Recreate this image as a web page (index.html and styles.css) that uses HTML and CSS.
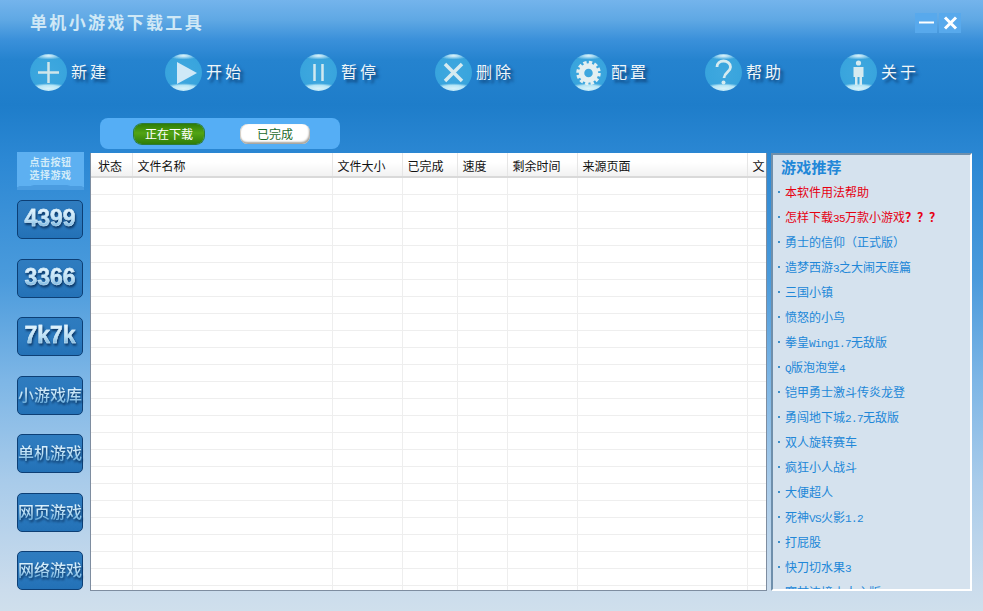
FILE: index.html
```html
<!DOCTYPE html>
<html lang="zh">
<head>
<meta charset="utf-8">
<title>单机小游戏下载工具</title>
<link rel="stylesheet" href="styles.css">
</head>
<body>
<div class="app">
  <header class="titlebar">
    <h1 class="title">单机小游戏下载工具</h1>
    <div class="winctl">
      <button class="winbtn"><svg viewBox="0 0 22 20" width="22" height="20"><path d="M4 9.500h15" stroke="#fff" stroke-width="2"/></svg></button>
      <button class="winbtn"><svg viewBox="0 0 22 20" width="22" height="20"><path d="M6 4.500l11 11M17 4.500l-11 11" stroke="#fff" stroke-width="3"/></svg></button>
    </div>
  </header>
  <nav class="toolbar">
    <div class="tool"><span class="ball"><svg viewBox="0 0 37 37"><path d="M18.500 8v21M8 18.500h21" stroke="#cfe6ea" stroke-width="2.500"/></svg></span><span class="tool-label">新建</span></div>
    <div class="tool"><span class="ball"><svg viewBox="0 0 37 37"><path d="M12 8L32 19 12 30z" fill="#cfe9f7"/></svg></span><span class="tool-label">开始</span></div>
    <div class="tool"><span class="ball"><svg viewBox="0 0 37 37"><path d="M14.500 10v17M22.500 10v17" stroke="#cfe9f0" stroke-width="2.500"/></svg></span><span class="tool-label">暂停</span></div>
    <div class="tool"><span class="ball"><svg viewBox="0 0 37 37"><path d="M10 10l17 17M27 10L10 27" stroke="#d6ebf0" stroke-width="3.500"/></svg></span><span class="tool-label">删除</span></div>
    <div class="tool"><span class="ball"><svg viewBox="0 0 37 37"><circle cx="18.500" cy="19" r="7" fill="none" stroke="#e3f0f2" stroke-width="5.500"/><circle cx="18.500" cy="19" r="10.500" fill="none" stroke="#e3f0f2" stroke-width="3.500" stroke-dasharray="3.300 2.200"/></svg></span><span class="tool-label">配置</span></div>
    <div class="tool"><span class="ball"><svg viewBox="0 0 37 37"><path d="M12 13c0-4 3-6 6.500-6s7 2.500 7 6c0 5-6 5-6.500 11" fill="none" stroke="#d6ebf0" stroke-width="2.800"/><circle cx="18.500" cy="28.500" r="2" fill="#d6ebf0"/></svg></span><span class="tool-label">帮助</span></div>
    <div class="tool"><span class="ball"><svg viewBox="0 0 37 37"><circle cx="18.500" cy="9" r="2.600" fill="#d6ebf0"/><path d="M13.500 13h10v10h-1.500v8h-2.500v-8h-2v8H15v-8h-1.500z" fill="#d6ebf0"/></svg></span><span class="tool-label">关于</span></div>
  </nav>
  <div class="tabs">
    <button class="tab tab-on">正在下载</button>
    <button class="tab tab-off">已完成</button>
  </div>
  <main class="content">
    <aside class="side">
      <div class="side-head">点击按钮<br>选择游戏</div>
      <button class="site site-num"><span class="site-text">4399</span></button>
      <button class="site site-num"><span class="site-text">3366</span></button>
      <button class="site site-num"><span class="site-text">7k7k</span></button>
      <button class="site"><span class="site-text">小游戏库</span></button>
      <button class="site"><span class="site-text">单机游戏</span></button>
      <button class="site"><span class="site-text">网页游戏</span></button>
      <button class="site"><span class="site-text">网络游戏</span></button>
    </aside>
    <section class="grid-wrap">
      <table class="grid">
        <colgroup><col class="c1"><col class="c2"><col class="c3"><col class="c4"><col class="c5"><col class="c6"><col class="c7"><col class="c8"></colgroup>
        <thead><tr><th>状态</th><th>文件名称</th><th>文件大小</th><th>已完成</th><th>速度</th><th>剩余时间</th><th>来源页面</th><th>文</th></tr></thead>
        <tbody>
          <tr><td></td><td></td><td></td><td></td><td></td><td></td><td></td><td></td></tr>
          <tr><td></td><td></td><td></td><td></td><td></td><td></td><td></td><td></td></tr>
          <tr><td></td><td></td><td></td><td></td><td></td><td></td><td></td><td></td></tr>
          <tr><td></td><td></td><td></td><td></td><td></td><td></td><td></td><td></td></tr>
          <tr><td></td><td></td><td></td><td></td><td></td><td></td><td></td><td></td></tr>
          <tr><td></td><td></td><td></td><td></td><td></td><td></td><td></td><td></td></tr>
          <tr><td></td><td></td><td></td><td></td><td></td><td></td><td></td><td></td></tr>
          <tr><td></td><td></td><td></td><td></td><td></td><td></td><td></td><td></td></tr>
          <tr><td></td><td></td><td></td><td></td><td></td><td></td><td></td><td></td></tr>
          <tr><td></td><td></td><td></td><td></td><td></td><td></td><td></td><td></td></tr>
          <tr><td></td><td></td><td></td><td></td><td></td><td></td><td></td><td></td></tr>
          <tr><td></td><td></td><td></td><td></td><td></td><td></td><td></td><td></td></tr>
          <tr><td></td><td></td><td></td><td></td><td></td><td></td><td></td><td></td></tr>
          <tr><td></td><td></td><td></td><td></td><td></td><td></td><td></td><td></td></tr>
          <tr><td></td><td></td><td></td><td></td><td></td><td></td><td></td><td></td></tr>
          <tr><td></td><td></td><td></td><td></td><td></td><td></td><td></td><td></td></tr>
          <tr><td></td><td></td><td></td><td></td><td></td><td></td><td></td><td></td></tr>
          <tr><td></td><td></td><td></td><td></td><td></td><td></td><td></td><td></td></tr>
          <tr><td></td><td></td><td></td><td></td><td></td><td></td><td></td><td></td></tr>
          <tr><td></td><td></td><td></td><td></td><td></td><td></td><td></td><td></td></tr>
          <tr><td></td><td></td><td></td><td></td><td></td><td></td><td></td><td></td></tr>
          <tr><td></td><td></td><td></td><td></td><td></td><td></td><td></td><td></td></tr>
          <tr><td></td><td></td><td></td><td></td><td></td><td></td><td></td><td></td></tr>
          <tr><td></td><td></td><td></td><td></td><td></td><td></td><td></td><td></td></tr>
          <tr><td></td><td></td><td></td><td></td><td></td><td></td><td></td><td></td></tr>
        </tbody>
      </table>
    </section>
    <aside class="rec">
      <h2 class="rec-title">游戏推荐</h2>
      <ul class="rec-list">
        <li class="hot"><span>本软件用法帮助</span></li>
        <li class="hot"><span>怎样下载<i>35</i>万款小游戏<b>？？？</b></span></li>
        <li><span>勇士的信仰（正式版）</span></li>
        <li><span>造梦西游<i>3</i>之大闹天庭篇</span></li>
        <li><span>三国小镇</span></li>
        <li><span>愤怒的小鸟</span></li>
        <li><span>拳皇<i>Wing1.7</i>无敌版</span></li>
        <li><span><i>Q</i>版泡泡堂<i>4</i></span></li>
        <li><span>铠甲勇士激斗传炎龙登</span></li>
        <li><span>勇闯地下城<i>2.7</i>无敌版</span></li>
        <li><span>双人旋转赛车</span></li>
        <li><span>疯狂小人战斗</span></li>
        <li><span>大便超人</span></li>
        <li><span>死神<i>VS</i>火影<i>1.2</i></span></li>
        <li><span>打屁股</span></li>
        <li><span>快刀切水果<i>3</i></span></li>
        <li><span>赛甘边境小人主版</span></li>
      </ul>
    </aside>
  </main>
</div>
</body>
</html>
```
FILE: styles.css
```css
* { box-sizing: border-box; }
html, body { margin: 0; height: 100%; overflow: hidden; }
body { font-family: "Noto Sans CJK SC", "Liberation Sans", sans-serif; }
button { font-family: inherit; border: 0; padding: 0; }
.app {
  width: 983px; height: 611px; display: flex; flex-direction: column;
  background: linear-gradient(180deg, #74b4ec 0, #5fa8e4 20px, #3a90da 40px, #2583cf 60px, #1e7dca 105px, #2c88d4 160px, #4b9bdc 280px, #7db6e6 380px, #a8cbea 480px, #cbdcec 590px, #cfdfec 611px);
}
.titlebar { height: 46px; padding: 11px 22px 0 30px; display: flex; justify-content: space-between; align-items: flex-start; }
.title { margin: 0; font-size: 17px; line-height: 21px; font-weight: 700; letter-spacing: 2.330px; color: #cfe8f6; white-space: nowrap; }
.winctl { display: flex; gap: 2px; margin-top: 2px; }
.winbtn { width: 22px; height: 20px; background: #58a9ec; display: block; }
.winbtn svg { display: block; }
.toolbar { height: 72px; padding: 8px 0 0 30px; display: flex; align-items: flex-start; }
.tool { width: 135px; display: flex; align-items: center; gap: 4px; height: 37px; }
.ball {
  width: 37px; height: 37px; flex: none; border-radius: 50%; display: block;
  background:
    radial-gradient(ellipse 56% 14% at 50% 93%, #d6f2fb 0, #b5e5f5 60%, transparent 100%),
    radial-gradient(ellipse 40% 10% at 50% 5%, #e4f6fc 0, transparent 100%),
    radial-gradient(circle at 50% 50%, #3fa8df 0, #38a4dd 72%, #6cc3e9 88%, #d8f2fb 100%);
}
.ball svg { display: block; width: 100%; height: 100%; }
.tool-label { font-size: 16px; line-height: 22px; margin-bottom: 4px; letter-spacing: 3px; color: #eef6fa; text-shadow: 3px 3px 3px #0c3f74; white-space: nowrap; }
.tabs { width: 240px; height: 31px; margin-left: 100px; padding: 6px 0 0 34px; background: #55aef5; border-radius: 8px; display: flex; gap: 36px; align-items: flex-start; flex: none; }
.tab { width: 70px; height: 20px; border-radius: 8px; font-size: 12px; line-height: 20px; text-align: center; }
.tab-on { background: linear-gradient(180deg, #2f7d08, #52a414 45%, #2f7d08); color: #fff; box-shadow: 0 0 0 1px #2c7a3a; }
.tab-off { background: #fff; color: #1d6b2c; box-shadow: inset -1px -2px 2px #a7a39c, inset 1px 0 1px #d5d0c8; }
.content { flex: 1; display: flex; align-items: flex-start; padding: 3px 0 0 17px; min-height: 0; }
.side { width: 67px; display: flex; flex-direction: column; align-items: flex-start; flex: none; }
.side-head {
  width: 67px; height: 38px; padding-top: 3px; color: #d3ecf9; font-size: 10px; line-height: 13px; font-weight: 700;
  background: radial-gradient(ellipse 46px 5px at 50% 100%, #4a9ce0 97%, transparent 100%), #5db0f1;
  text-align: center; letter-spacing: .5px; margin-bottom: 10px;
}
.site {
  width: 66px; height: 39px; margin-bottom: 19.500px; padding-bottom: 3px; border: 1px solid #0d3f75; border-radius: 5px;
  background: linear-gradient(180deg, #2f7cbf, #2a78bd 60%, #2371b6); font-size: 16px; line-height: 24px; font-weight: 500;
  white-space: nowrap; text-align: center; display: block;
}
.site-text {
  display: inline-block; color: transparent;
  background: linear-gradient(180deg, #e6f5fd 15%, #bfe2f6 55%, #6eaedb 85%); -webkit-background-clip: text; background-clip: text;
  filter: drop-shadow(1px 2px 1px #0b3563);
}
.site-num { font-family: "Liberation Sans", sans-serif; font-size: 23px; line-height: 28px; font-weight: 700; }
.site-num .site-text { -webkit-text-stroke: .4px #cfe8f8; }
.grid-wrap { width: 677px; height: 438px; margin: 1px 0 0 6px; background: #fff; border: solid #7e8da0; border-width: 0 1px 1px 1px; overflow: hidden; flex: none; }
.grid { width: 675px; border-collapse: collapse; table-layout: fixed; }
.c1 { width: 41px; } .c2 { width: 200px; } .c3 { width: 70px; } .c4 { width: 55px; } .c5 { width: 50px; } .c6 { width: 70px; } .c7 { width: 170px; } .c8 { width: 19px; }
.grid th { height: 24px; padding: 3px 0 0 5px; text-align: left; font-size: 12px; line-height: 16px; font-weight: 400; color: #111; background: linear-gradient(180deg, #fff 0, #fff 40%, #f1f1f1 100%); border-right: 1px solid #e6e6e6; border-bottom: 2px solid #d9d9d9; overflow: hidden; white-space: nowrap; }
.grid th:first-child { padding-left: 7px; }
.grid td { height: 17px; padding: 0; border-right: 1px solid #eeeeee; border-bottom: 1px solid #eeeeee; }
.rec { width: 201px; height: 438px; margin: 1px 0 0 4px; padding: 2px 0 0 5px; background: #d5e2ee; border: 2px solid; border-color: #6f8fab #fff #fff #6f8fab; overflow: hidden; flex: none; }
.rec-title { margin: 0 0 0 3px; font-size: 15px; line-height: 20px; font-weight: 700; color: #2187d8; letter-spacing: .2px; }
.rec-list { list-style: none; margin: 2px 0 0; padding: 0; }
.rec-list li { height: 25px; font-size: 12px; line-height: 25px; color: #2187d8; white-space: nowrap; display: flex; align-items: center; gap: 5px; }
.rec-list li::before { content: ""; width: 2px; height: 2px; background: #3f8fc9; flex: none; }
.rec-list .hot { color: #e60012; }
.rec-list i { font-family: "Liberation Mono", monospace; font-size: 11px; line-height: 1; letter-spacing: -.6px; font-style: normal; }
```
